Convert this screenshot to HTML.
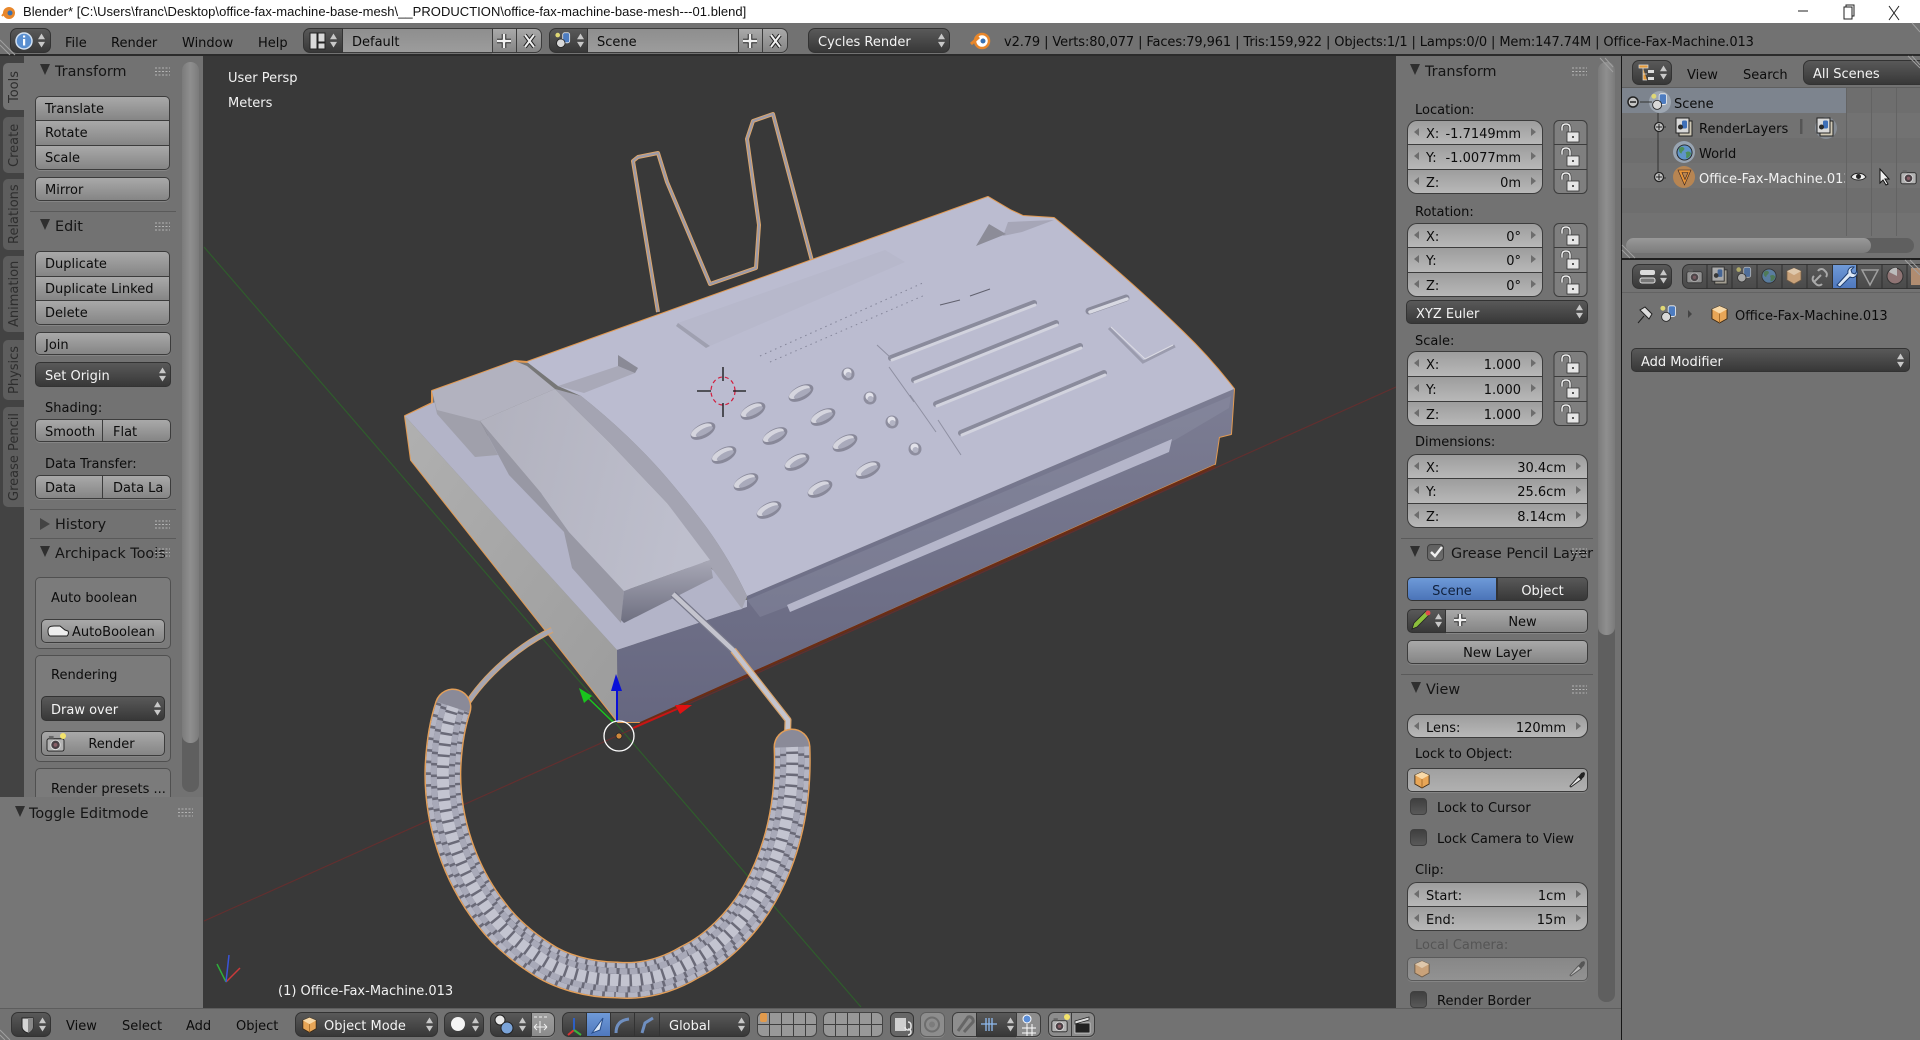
<!DOCTYPE html>
<html><head><meta charset="utf-8"><title>Blender</title>
<style>
html,body{margin:0;padding:0;background:#727272;}
#r{position:relative;width:1920px;height:1040px;overflow:hidden;background:#727272;font:13px/16px "DejaVu Sans","Liberation Sans",sans-serif;color:#0c0c0c;}
#r div{position:absolute;box-sizing:border-box;white-space:nowrap;}
.t{height:16px;line-height:16px;margin-top:2px}
.h{font-size:14.4px;color:#151515}
.w{color:#f2f2f2}
.g{color:#555}
.b{background:linear-gradient(#a9a9a9,#858585);border:1px solid #3c3c3c;border-radius:5px;line-height:26px;padding-left:9px;box-shadow:0 1px 0 #858585}
.c{text-align:center;padding-left:0}
.d{background:linear-gradient(#595959,#383838);border:1px solid #333;border-radius:5px;line-height:27px;padding-left:9px;color:#f4f4f4}
.f{background:linear-gradient(#8e8e8e,#9c9c9c);border-top:1px solid #3c3c3c;border-bottom:1px solid #3c3c3c}
.n{background:linear-gradient(#9d9d9d,#b8b8b8);border:1px solid #3c3c3c;line-height:27px;padding-left:18px}
.n span{position:absolute;right:21px;top:0}
.n:before{content:"";position:absolute;left:6px;top:7px;border:4px solid transparent;border-left:0;border-right:5px solid #6d6d6d}
.n:after{content:"";position:absolute;right:6px;top:7px;border:4px solid transparent;border-right:0;border-left:5px solid #6d6d6d}
.s{border-radius:10px}
.ft{border-radius:10px 10px 0 0;border-bottom:0}
.fm{border-radius:0;border-bottom:0}
.fb{border-radius:0 0 10px 10px}
.box{border:1px solid #505050;border-radius:5px;background:#7b7b7b}
.div{height:1px;background:#5a5a5a}
.tab{left:3px;width:21px;background:#5d5d5d;border-radius:5px 0 0 5px;color:#2e2e2e}
.tab span{position:absolute;left:1px;top:0;width:21px;height:100%;line-height:21px;text-align:center;writing-mode:vertical-rl;transform:rotate(180deg)}
.ck{background:linear-gradient(#3f3f3f,#595959);border:1px solid #404040;border-radius:4px;width:17px;height:17px}
.row{left:1622px;width:298px;height:25px}
svg{position:absolute;left:0;top:0}
</style></head><body><div id="r">

<!-- title bar -->
<div style="left:0;top:0;width:1920px;height:23px;background:#fff"></div>
<div style="left:23px;top:4px;height:16px;font:13px/16px 'Liberation Sans',sans-serif;color:#111;letter-spacing:.03px">Blender* [C:\Users\franc\Desktop\office-fax-machine-base-mesh\__PRODUCTION\office-fax-machine-base-mesh---01.blend]</div>

<!-- top header -->
<div style="left:0;top:23px;width:1920px;height:33px;background:#727272;border-bottom:2px solid #2b2b2b"></div>
<div class="d" style="left:10px;top:28px;width:41px;height:25px;border-radius:7px"></div>
<div class="t" style="left:65px;top:34px">File</div>
<div class="t" style="left:111px;top:34px">Render</div>
<div class="t" style="left:182px;top:34px">Window</div>
<div class="t" style="left:258px;top:34px">Help</div>
<div class="d" style="left:303px;top:28px;width:40px;height:25px;border-radius:7px 0 0 7px"></div>
<div class="f" style="left:343px;top:28px;width:149px;height:25px"></div>
<div class="t" style="left:352px;top:33px">Default</div>
<div class="b" style="left:492px;top:28px;width:25px;height:25px;border-radius:0"></div>
<div class="b" style="left:517px;top:28px;width:25px;height:25px;border-radius:0 7px 7px 0;border-left:0"></div>
<div class="d" style="left:549px;top:28px;width:39px;height:25px;border-radius:7px 0 0 7px"></div>
<div class="f" style="left:588px;top:28px;width:150px;height:25px"></div>
<div class="t" style="left:597px;top:33px">Scene</div>
<div class="b" style="left:738px;top:28px;width:25px;height:25px;border-radius:0"></div>
<div class="b" style="left:763px;top:28px;width:25px;height:25px;border-radius:0 7px 7px 0;border-left:0"></div>
<div class="d" style="left:808px;top:28px;width:142px;height:25px;border-radius:7px">Cycles Render</div>
<div class="t" style="left:1004px;top:33px;width:760px;letter-spacing:-.11px">v2.79 | Verts:80,077 | Faces:79,961 | Tris:159,922 | Objects:1/1 | Lamps:0/0 | Mem:147.74M | Office-Fax-Machine.013</div>

<!-- left column -->
<div style="left:0;top:56px;width:24px;height:952px;background:#434343"></div>
<div style="left:24px;top:56px;width:179px;height:952px;background:#727272"></div>
<div class="tab" style="top:63px;height:47px;background:#727272"><span>Tools</span></div>
<div class="tab" style="top:117px;height:56px"><span>Create</span></div>
<div class="tab" style="top:179px;height:71px"><span>Relations</span></div>
<div class="tab" style="top:256px;height:76px"><span>Animation</span></div>
<div class="tab" style="top:340px;height:60px"><span>Physics</span></div>
<div class="tab" style="top:407px;height:100px"><span>Grease Pencil</span></div>
<div style="left:182px;top:62px;width:17px;height:730px;background:#5f5f5f;border-radius:8px"></div>
<div style="left:182px;top:62px;width:17px;height:681px;background:linear-gradient(90deg,#7b7b7b,#8f8f8f 50%,#7b7b7b);border-radius:8px"></div>

<div class="t h" style="left:55px;top:62px">Transform</div>
<div class="b" style="left:35px;top:96px;width:135px;height:24px;border-radius:5px 5px 0 0;border-bottom:0">Translate</div>
<div class="b" style="left:35px;top:120px;width:135px;height:25px;border-radius:0;border-bottom:0">Rotate</div>
<div class="b" style="left:35px;top:145px;width:135px;height:25px;border-radius:0 0 5px 5px">Scale</div>
<div class="b" style="left:35px;top:177px;width:135px;height:24px">Mirror</div>
<div class="div" style="left:30px;top:211px;width:146px"></div>
<div class="t h" style="left:55px;top:217px">Edit</div>
<div class="b" style="left:35px;top:251px;width:135px;height:25px;border-radius:5px 5px 0 0;border-bottom:0">Duplicate</div>
<div class="b" style="left:35px;top:276px;width:135px;height:24px;border-radius:0;border-bottom:0">Duplicate Linked</div>
<div class="b" style="left:35px;top:300px;width:135px;height:25px;border-radius:0 0 5px 5px">Delete</div>
<div class="b" style="left:35px;top:332px;width:136px;height:23px">Join</div>
<div class="d" style="left:35px;top:362px;width:136px;height:25px">Set Origin</div>
<div class="t" style="left:45px;top:399px">Shading:</div>
<div class="b" style="left:35px;top:419px;width:68px;height:23px;border-radius:5px 0 0 5px">Smooth</div>
<div class="b" style="left:102px;top:419px;width:69px;height:23px;border-radius:0 5px 5px 0;padding-left:10px">Flat</div>
<div class="t" style="left:45px;top:455px">Data Transfer:</div>
<div class="b" style="left:35px;top:475px;width:68px;height:24px;border-radius:5px 0 0 5px">Data</div>
<div class="b" style="left:102px;top:475px;width:69px;height:24px;border-radius:0 5px 5px 0;padding-left:10px">Data La</div>
<div class="div" style="left:30px;top:509px;width:146px"></div>
<div class="t h" style="left:55px;top:515px">History</div>
<div class="div" style="left:30px;top:538px;width:146px"></div>
<div class="t h" style="left:55px;top:544px;width:113px;overflow:hidden">Archipack Tools</div>
<div class="box" style="left:35px;top:577px;width:136px;height:72px"></div>
<div class="t" style="left:51px;top:589px">Auto boolean</div>
<div class="b" style="left:41px;top:619px;width:124px;height:24px;padding-left:30px">AutoBoolean</div>
<div class="box" style="left:35px;top:655px;width:136px;height:107px"></div>
<div class="t" style="left:51px;top:666px">Rendering</div>
<div class="d" style="left:41px;top:696px;width:124px;height:25px">Draw over</div>
<div class="b c" style="left:41px;top:731px;width:124px;height:25px;padding-left:17px">Render</div>
<div class="box" style="left:35px;top:768px;width:136px;height:40px"></div>
<div class="t" style="left:51px;top:780px">Render presets ...</div>
<div style="left:0;top:797px;width:203px;height:211px;background:#767676"></div>
<div class="t h" style="left:29px;top:804px">Toggle Editmode</div>

<!-- viewport -->
<div style="left:203px;top:56px;width:1193px;height:952px;background:#393939"></div>

<!-- right N panel -->
<div style="left:1396px;top:56px;width:225px;height:952px;background:#727272"></div>
<div style="left:1621px;top:56px;width:1px;height:984px;background:#161616"></div>
<div style="left:1598px;top:62px;width:17px;height:940px;background:#5f5f5f;border-radius:8px"></div>
<div style="left:1598px;top:62px;width:17px;height:573px;background:linear-gradient(90deg,#7b7b7b,#8f8f8f 50%,#7b7b7b);border-radius:8px"></div>
<div class="t h" style="left:1425px;top:62px">Transform</div>
<div class="t" style="left:1415px;top:101px">Location:</div>
<div class="n ft" style="left:1407px;top:120px;width:136px;height:24px">X:<span>-1.7149mm</span></div>
<div class="n fm" style="left:1407px;top:144px;width:136px;height:25px">Y:<span>-1.0077mm</span></div>
<div class="n fb" style="left:1407px;top:169px;width:136px;height:25px">Z:<span>0m</span></div>
<div class="t" style="left:1415px;top:203px">Rotation:</div>
<div class="n ft" style="left:1407px;top:223px;width:136px;height:24px">X:<span>0°</span></div>
<div class="n fm" style="left:1407px;top:247px;width:136px;height:25px">Y:<span>0°</span></div>
<div class="n fb" style="left:1407px;top:272px;width:136px;height:25px">Z:<span>0°</span></div>
<div class="d" style="left:1406px;top:300px;width:182px;height:24px">XYZ Euler</div>
<div class="t" style="left:1415px;top:332px">Scale:</div>
<div class="n ft" style="left:1407px;top:351px;width:136px;height:25px">X:<span>1.000</span></div>
<div class="n fm" style="left:1407px;top:376px;width:136px;height:25px">Y:<span>1.000</span></div>
<div class="n fb" style="left:1407px;top:401px;width:136px;height:25px">Z:<span>1.000</span></div>
<div class="t" style="left:1415px;top:433px">Dimensions:</div>
<div class="n ft" style="left:1407px;top:454px;width:181px;height:24px">X:<span>30.4cm</span></div>
<div class="n fm" style="left:1407px;top:478px;width:181px;height:25px">Y:<span>25.6cm</span></div>
<div class="n fb" style="left:1407px;top:503px;width:181px;height:25px">Z:<span>8.14cm</span></div>
<div class="div" style="left:1401px;top:538px;width:192px"></div>
<div class="ck" style="left:1427px;top:544px;background:linear-gradient(#5f5f5f,#6d6d6d)"></div>
<div class="t h" style="left:1451px;top:544px">Grease Pencil Layer</div>
<div class="d" style="left:1407px;top:577px;width:90px;height:24px;border-radius:5px 0 0 5px;background:linear-gradient(#6e9ad8,#4b74b8);color:#10203c;text-align:center;padding:0">Scene</div>
<div class="d" style="left:1497px;top:577px;width:91px;height:24px;border-radius:0 5px 5px 0;text-align:center;padding:0">Object</div>
<div class="d" style="left:1407px;top:609px;width:39px;height:24px;border-radius:5px 0 0 5px"></div>
<div class="b c" style="left:1446px;top:609px;width:142px;height:24px;border-radius:0 5px 5px 0;border-left:0;padding-left:12px">New</div>
<div class="b c" style="left:1407px;top:640px;width:181px;height:24px">New Layer</div>
<div class="div" style="left:1401px;top:674px;width:192px"></div>
<div class="t h" style="left:1426px;top:680px">View</div>
<div class="n s" style="left:1407px;top:714px;width:181px;height:24px">Lens:<span>120mm</span></div>
<div class="t" style="left:1415px;top:745px">Lock to Object:</div>
<div class="b" style="left:1407px;top:768px;width:181px;height:24px;background:linear-gradient(#a0a0a0,#b0b0b0)"></div>
<div class="ck" style="left:1410px;top:798px"></div>
<div class="t" style="left:1437px;top:799px">Lock to Cursor</div>
<div class="ck" style="left:1410px;top:829px"></div>
<div class="t" style="left:1437px;top:830px">Lock Camera to View</div>
<div class="t" style="left:1415px;top:861px">Clip:</div>
<div class="n ft" style="left:1407px;top:882px;width:181px;height:24px">Start:<span>1cm</span></div>
<div class="n fb" style="left:1407px;top:906px;width:181px;height:25px">End:<span>15m</span></div>
<div class="t g" style="left:1415px;top:936px">Local Camera:</div>
<div class="b" style="left:1407px;top:957px;width:181px;height:24px;background:linear-gradient(#878787,#929292);border-color:#5a5a5a"></div>
<div class="ck" style="left:1410px;top:991px"></div>
<div class="t" style="left:1437px;top:992px">Render Border</div>
<div style="left:1396px;top:1008px;width:225px;height:32px;background:#767676"></div>

<!-- bottom header -->
<div style="left:0;top:1008px;width:1621px;height:32px;background:#727272;border-top:1px solid #5d5d5d"></div>
<div class="d" style="left:11px;top:1012px;width:40px;height:25px;border-radius:7px"></div>
<div class="t" style="left:66px;top:1017px">View</div>
<div class="t" style="left:122px;top:1017px">Select</div>
<div class="t" style="left:186px;top:1017px">Add</div>
<div class="t" style="left:236px;top:1017px">Object</div>
<div class="d" style="left:295px;top:1012px;width:143px;height:25px;border-radius:7px;padding-left:28px">Object Mode</div>
<div class="d" style="left:444px;top:1012px;width:40px;height:25px;border-radius:7px"></div>
<div class="d" style="left:490px;top:1012px;width:42px;height:25px;border-radius:7px 0 0 7px"></div>
<div class="b" style="left:531px;top:1012px;width:24px;height:25px;border-radius:0 7px 7px 0;background:linear-gradient(#9f9f9f,#8b8b8b)"></div>
<div class="d" style="left:562px;top:1012px;width:25px;height:25px;border-radius:7px 0 0 7px"></div>
<div class="d" style="left:586px;top:1012px;width:25px;height:25px;border-radius:0;background:linear-gradient(#6f9ad8,#4f78bd)"></div>
<div class="d" style="left:610px;top:1012px;width:25px;height:25px;border-radius:0"></div>
<div class="d" style="left:634px;top:1012px;width:26px;height:25px;border-radius:0"></div>
<div class="d" style="left:659px;top:1012px;width:91px;height:25px;border-radius:0 7px 7px 0;padding-left:9px">Global</div>
<div style="left:757px;top:1012px;width:60px;height:25px;border:1px solid #444;border-radius:6px;background:repeating-linear-gradient(90deg,transparent 0 11px,#3e3e3e 11px 12px),linear-gradient(180deg,transparent 11px,#3e3e3e 11px,#3e3e3e 12px,transparent 12px),#989898"></div>
<div style="left:823px;top:1012px;width:60px;height:25px;border:1px solid #444;border-radius:6px;background:repeating-linear-gradient(90deg,transparent 0 11px,#3e3e3e 11px 12px),linear-gradient(180deg,transparent 11px,#3e3e3e 11px,#3e3e3e 12px,transparent 12px),#989898"></div>
<div class="d" style="left:890px;top:1012px;width:24px;height:25px;border-radius:6px;background:#666"></div>
<div class="b" style="left:920px;top:1012px;width:25px;height:25px;border-radius:6px;background:#8d8d8d;border-color:#5e5e5e"></div>
<div class="b" style="left:952px;top:1012px;width:25px;height:25px;border-radius:6px 0 0 6px;background:#8d8d8d"></div>
<div class="d" style="left:976px;top:1012px;width:41px;height:25px;border-radius:0"></div>
<div class="b" style="left:1016px;top:1012px;width:25px;height:25px;border-radius:0 6px 6px 0;background:#8d8d8d"></div>
<div class="b" style="left:1048px;top:1012px;width:24px;height:25px;border-radius:6px 0 0 6px;background:#8d8d8d"></div>
<div class="b" style="left:1071px;top:1012px;width:24px;height:25px;border-radius:0 6px 6px 0;background:#8d8d8d"></div>

<!-- outliner -->
<div style="left:1622px;top:56px;width:298px;height:204px;background:#727272"></div>
<div style="left:1622px;top:87px;width:298px;height:1px;background:#5f5f5f"></div>
<div class="row" style="top:88px;background:#6e6e6e"></div>
<div class="row" style="top:113px;background:#727272"></div>
<div class="row" style="top:138px;background:#6e6e6e"></div>
<div class="row" style="top:163px;background:#727272"></div>
<div class="row" style="top:188px;background:#6e6e6e"></div>
<div class="row" style="top:213px;height:25px;background:#727272"></div>
<div class="row" style="top:88px;width:224px;background:#7d848e"></div>
<div style="left:1846px;top:88px;width:1px;height:148px;background:#636363"></div>
<div style="left:1871px;top:88px;width:1px;height:148px;background:#636363"></div>
<div style="left:1896px;top:88px;width:1px;height:148px;background:#636363"></div>
<div class="d" style="left:1632px;top:60px;width:40px;height:25px;border-radius:7px"></div>
<div class="t" style="left:1687px;top:66px">View</div>
<div class="t" style="left:1743px;top:66px">Search</div>
<div class="d" style="left:1803px;top:60px;width:125px;height:25px;border-radius:7px;line-height:28px">All Scenes</div>
<div class="t" style="left:1674px;top:95px">Scene</div>
<div class="t" style="left:1699px;top:120px">RenderLayers</div>
<div class="t" style="left:1699px;top:145px">World</div>
<div class="t w" style="left:1699px;top:170px;width:146px;overflow:hidden">Office-Fax-Machine.013</div>
<div style="left:1626px;top:238px;width:288px;height:15px;background:#5f5f5f;border-radius:8px"></div>
<div style="left:1626px;top:238px;width:245px;height:15px;background:linear-gradient(#999,#7c7c7c);border-radius:8px"></div>
<div style="left:1622px;top:258px;width:298px;height:2px;background:#1f1f1f"></div>

<!-- properties -->
<div style="left:1622px;top:260px;width:298px;height:780px;background:#727272"></div>
<div style="left:1622px;top:292px;width:298px;height:1px;background:#636363"></div>
<div class="d" style="left:1632px;top:264px;width:40px;height:25px;border-radius:7px"></div>
<div class="d" style="left:1682px;top:264px;width:250px;height:25px;border-radius:7px 0 0 7px;background:linear-gradient(#5a5a5a,#4a4a4a)"></div>
<div class="d" style="left:1832px;top:264px;width:25px;height:25px;border-radius:0;background:linear-gradient(#6f9ad8,#4f78bd)"></div>
<div class="t" style="left:1735px;top:307px">Office-Fax-Machine.013</div>
<div class="d" style="left:1631px;top:348px;width:279px;height:24px">Add Modifier</div>

<!-- viewport captions -->
<div class="t w" style="left:228px;top:69px;z-index:3">User Persp</div>
<div class="t w" style="left:228px;top:94px;z-index:3">Meters</div>
<div class="t w" style="left:278px;top:982px;z-index:3">(1) Office-Fax-Machine.013</div>

<!-- drawing overlay -->
<svg width="1920" height="1040" viewBox="0 0 1920 1040" xmlns="http://www.w3.org/2000/svg">
<defs>
<clipPath id="vp"><rect x="203" y="56" width="1193" height="952"/></clipPath>
<linearGradient id="side" x1="0" y1="0" x2="1" y2="1"><stop offset="0" stop-color="#b0b0b0"/><stop offset="1" stop-color="#9c9c9c"/></linearGradient>
<linearGradient id="front" x1="0" y1="0" x2="0" y2="1"><stop offset="0" stop-color="#7c7d93"/><stop offset="1" stop-color="#666780"/></linearGradient>
<linearGradient id="hs" x1="0" y1="0" x2="1" y2="0.2"><stop offset="0" stop-color="#b1b1bd"/><stop offset="1" stop-color="#bebfcd"/></linearGradient>
<linearGradient id="he" x1="0" y1="0" x2="0" y2="1"><stop offset="0" stop-color="#a8a8b6"/><stop offset="1" stop-color="#6e6f80"/></linearGradient>
<path id="cp" d="M792 747C794 800 784 850 760 893C742 925 715 950 690 962C665 977 640 982 617 980C590 980 560 972 540 958C520 945 505 932 492 915C460 875 441 820 443 767C444 745 447 725 453 707"/>
<symbol id="ud" viewBox="0 0 8 16" overflow="visible"><path d="M0 6.500L4 0l4 6.500zM0 9.500L4 16l4-6.500z" fill="#c8c8c8"/></symbol>
<symbol id="tri" viewBox="0 0 10 11"><path d="M0 0h10L5 11z" fill="#2f2f2f"/></symbol>
<symbol id="grip" viewBox="0 0 15 9"><path d="M0 1h15M0 4.500h15M0 8h15" stroke="#b4b4b4" stroke-width="1" stroke-dasharray="2 1.500" fill="none"/></symbol>
<symbol id="lk" viewBox="0 0 20 20"><path d="M2 7.500V4.500c0-2.500 1.500-3.500 4-3.500s4 1 4 3.500V9" fill="none" stroke="#333" stroke-width="2.600"/><path d="M2 7.500V4.500c0-2.500 1.500-3.500 4-3.500s4 1 4 3.500V9" fill="none" stroke="#f4f4f4" stroke-width="1.500"/><rect x="7" y="9" width="12" height="10" fill="#e6e6e6" stroke="#333" stroke-width=".8"/><rect x="12" y="13" width="2" height="2" fill="#555"/></symbol>
<symbol id="key" viewBox="-16 -10 32 20" overflow="visible"><g transform="rotate(-28)"><ellipse rx="13.500" ry="7" fill="#888899"/><ellipse cx="-1" cy="-1.500" rx="11.500" ry="4.700" fill="#d5d5de"/><ellipse cx="1" cy="1" rx="9.500" ry="3" fill="#a9aabb"/></g></symbol>
<symbol id="sk" viewBox="-8 -8 16 16" overflow="visible"><circle r="6.500" fill="#8d8d9e"/><circle cx="-.5" cy="-1.500" r="4" fill="#e2e2ea"/><circle cx=".5" cy="1" r="3" fill="#b3b4c4"/></symbol>
<symbol id="cube" viewBox="0 0 18 20"><path d="M9 1l8 3.500v10L9 19l-8-4.500v-10z" fill="#e8a657" stroke="#3d2a14"/><path d="M9 1l8 3.500L9 9 1 4.500z" fill="#f8d9a8"/><path d="M9 9v10" stroke="#a46a28"/></symbol>
<symbol id="cubeg" viewBox="0 0 18 20"><path d="M9 1l8 3.500v10L9 19l-8-4.500v-10z" fill="#c9a27a" stroke="#6d5a46"/><path d="M9 1l8 3.500L9 9 1 4.500z" fill="#dec7ab"/></symbol>
<symbol id="drop" viewBox="0 0 18 20"><path d="M2 18l-1-1 9-10 3 3z" fill="#e6e6e6" stroke="#222"/><path d="M10 7l3-4 3-1 1 2-1 3-3 3z" fill="#222"/></symbol>
<symbol id="scn" viewBox="0 0 22 22"><circle cx="3.500" cy="4" r="3" fill="#dfd774"/><rect x="10" y="1" width="9" height="13" rx="2.500" fill="#4d7cc0" stroke="#f1f1f1"/><circle cx="7.500" cy="14.500" r="5.500" fill="#d8d8d8" stroke="#222"/></symbol>
<symbol id="rl" viewBox="0 0 18 20"><rect x="4" y="4" width="13" height="15" fill="#cfc8b5" stroke="#222"/><rect x="1" y="1" width="13" height="15" fill="#d8d8d8" stroke="#222"/><rect x="7" y="3.500" width="5" height="8" rx="1.500" fill="#3e6fb8"/><circle cx="5.500" cy="10" r="2.500" fill="#2b2b2b"/></symbol>
<symbol id="globe" viewBox="0 0 18 18"><circle cx="9" cy="9" r="8" fill="#5f94c9" stroke="#222"/><path d="M3 5c3-3 5-2 6 0-1 3-3 2-3 5-2 0-3-2-3-5zM10 9c3-2 5-1 6 1-1 3-3 5-5 5-1-2 1-3-1-6z" fill="#4e8f5a"/></symbol>
<symbol id="cam" viewBox="0 0 20 18"><rect x="1" y="4" width="18" height="13" rx="2" fill="#b3b3b3" stroke="#222"/><rect x="3" y="1" width="5" height="3" fill="#666"/><circle cx="10" cy="10.500" r="5" fill="#4a4045" stroke="#ddd"/><circle cx="10" cy="10.500" r="2" fill="#8a5f67"/></symbol>
</defs>

<!-- viewport -->
<g clip-path="url(#vp)">
<path d="M204 247L861 1007" stroke="#2f5d2c" stroke-width="1.200"/>
<path d="M204 921L1396 387" stroke="#622f2f" stroke-width="1.200"/>

<!-- paper holder wires -->
<path d="M658 312L633 161 638 157 658 153 667 182 710 284 756 268 759 225 747 139 753 121 773 114 812 261" fill="none" stroke="#dba66d" stroke-width="4" stroke-linejoin="round"/>
<path d="M658 312L633 161 638 157 658 153 667 182 710 284 756 268 759 225 747 139 753 121 773 114 812 261" fill="none" stroke="#9a9aab" stroke-width="2" stroke-linejoin="round"/>

<!-- silhouette -->
<path d="M405 416L432 403 432 391 515 361 527 362 988 197 1010 210 1023 216 1054 218Q1130 280 1183 332Q1210 358 1234 389L1231 434 1219 437 1215 464 640 722 618 722 411 460z" fill="#777" stroke="#e29a52" stroke-width="2" stroke-linejoin="round"/>
<path d="M640 723L1215 466" stroke="#6a2d15" stroke-width="2.500"/>
<!-- base side -->
<path d="M405 416L411 460 618 722 617 650z" fill="url(#side)"/>
<!-- base top -->
<path d="M405 416L450 395 640 600 747 600 747 607 617 650z" fill="#b3b4c8"/>
<!-- front -->
<path d="M747 596L1234 389 1231 434 1219 437 1215 464 640 722 618 722 617 650 747 607z" fill="url(#front)"/>
<path d="M747 600L1231 396 1229 408 1175 440 789 606 760 617z" fill="#9597ab" opacity=".3"/>
<path d="M1172 439L1169 452 790 612 787 605z" fill="#b5b6ca"/>
<!-- top surface -->
<path d="M527 362L988 197 1010 210 1023 216 1054 218Q1130 280 1183 332Q1210 358 1234 389L747 596Q730 560 707 528Q690 505 667 478Q650 458 627 436Q605 415 581 396L558 386z" fill="#bbbcd0"/>
<!-- shelf below the handset end -->
<path d="M700 560L747 596 742 609 624 640 610 620z" fill="#b3b4c8"/>
<!-- seam wedge -->
<path d="M555 389L581 396Q605 415 627 436Q650 458 667 478Q690 505 707 528Q730 560 747 596L742 609 710 566 667 503 610 443z" fill="#a4a4b2"/>
<!-- left fin and shade -->
<path d="M558 386L618 366 635 373 584 393z" fill="#a9a9b8"/>
<path d="M618 355L638 368 635 373 618 366z" fill="#8a8a96"/>
<!-- back raised panel -->
<path d="M678 323L885 250 905 262 710 346z" fill="#b7b8cb"/>
<path d="M678 323L710 346 706 348 676 326z" fill="#9fa0b0"/>
<!-- right fin -->
<path d="M1003 236L1008 222 1054 220 1022 232z" fill="#a6a6b7"/>
<path d="M976 246L989 224 1006 234z" fill="#8c8c98"/>
<!-- dashes and dots -->
<path d="M760 356L925 282M770 362L925 295" stroke="#85869a" stroke-width="1" stroke-dasharray="1.500 4"/>
<path d="M940 305L960 300M970 296L990 289" stroke="#60606e" stroke-width="1"/>
<!-- bars -->
<path d="M891 358L1034 303M914 380L1056 323M936 404L1080 346M961 433L1104 373" stroke="#8a8b9c" stroke-width="6" stroke-linecap="round"/>
<path d="M892 360L1035 305M915 382L1057 325M937 406L1081 348M962 435L1105 375" stroke="#d2d3de" stroke-width="3" stroke-linecap="round"/>
<path d="M877 345L891 358M889 367L914 402M910 395L936 432M938 420L961 455" stroke="#8f90a2" stroke-width="1"/>
<path d="M1089 311L1126 298" stroke="#8a8b9c" stroke-width="7" stroke-linecap="round"/>
<path d="M1090 312L1127 299" stroke="#d8d9e2" stroke-width="3.500" stroke-linecap="round"/>
<path d="M1109 328L1143 362 1175 346" fill="none" stroke="#9b9cae" stroke-width="3"/>
<path d="M1111 327L1145 359 1173 345" fill="none" stroke="#dcdce4" stroke-width="1"/>
<!-- keypad -->
<use href="#key" x="687" y="421" width="32" height="20"/><use href="#key" x="737" y="401" width="32" height="20"/><use href="#key" x="785" y="383" width="32" height="20"/>
<use href="#key" x="708" y="445" width="32" height="20"/><use href="#key" x="759" y="426" width="32" height="20"/><use href="#key" x="807" y="407" width="32" height="20"/>
<use href="#key" x="730" y="472" width="32" height="20"/><use href="#key" x="781" y="452" width="32" height="20"/><use href="#key" x="829" y="433" width="32" height="20"/>
<use href="#key" x="753" y="500" width="32" height="20"/><use href="#key" x="804" y="479" width="32" height="20"/><use href="#key" x="852" y="460" width="32" height="20"/>
<use href="#sk" x="840" y="366" width="16" height="16"/><use href="#sk" x="862" y="390" width="16" height="16"/><use href="#sk" x="884" y="414" width="16" height="16"/><use href="#sk" x="907" y="441" width="16" height="16"/>
<!-- handset -->
<path d="M437 414L475 457 498 455 480 421 432 391z" fill="#a0a0ab"/>
<path d="M480 421L509 475 564 532 572 568 621 623 624 591 569 532 541 493z" fill="#9898a4"/>
<path d="M480 421L555 389 610 443 667 503 710 560 624 591 569 532 541 493z" fill="url(#hs)"/>
<path d="M624 591L710 560 713 578 624 623 621 620z" fill="url(#he)"/>
<path d="M432 391L515 361 527 366 555 389 480 421 437 410z" fill="#b2b2bf"/>
<!-- 3D cursor -->
<ellipse cx="723" cy="391" rx="12" ry="14" fill="none" stroke="#d21f3f" stroke-width="1.200" stroke-dasharray="4 3"/>
<path d="M723 367V381M723 403V417M697 391H711M733 391H746" stroke="#111" stroke-width="1.300"/>
<!-- cords -->
<path d="M552 630C520 645 485 675 465 707" fill="none" stroke="#d8a36a" stroke-width="6"/>
<path d="M552 630C520 645 485 675 465 707" fill="none" stroke="#a6a6b2" stroke-width="4"/>
<path d="M733 650L788 720 787 750" fill="none" stroke="#d8a36a" stroke-width="7" stroke-linejoin="round"/>
<path d="M673 594L733 650" fill="none" stroke="#77788a" stroke-width="7"/>
<path d="M673 594L733 650 788 720 787 750" fill="none" stroke="#c4c4ce" stroke-width="4.500" stroke-linejoin="round"/>
<!-- coil -->
<use href="#cp" fill="none" stroke="#e39f59" stroke-width="37" stroke-linecap="round"/>
<use href="#cp" fill="none" stroke="#8a8a98" stroke-width="34" stroke-linecap="round"/>
<use href="#cp" fill="none" stroke="#6a6a78" stroke-width="34"/>
<use href="#cp" fill="none" stroke="#b4b5c3" stroke-width="34" stroke-dasharray="8.500 2.500"/>
<use href="#cp" fill="none" stroke="#6a6a78" stroke-width="24"/>
<use href="#cp" fill="none" stroke="#a8a9b8" stroke-width="24" stroke-dasharray="8.500 2.500" stroke-dashoffset="2"/>
<use href="#cp" fill="none" stroke="#6a6a78" stroke-width="12"/>
<use href="#cp" fill="none" stroke="#c3c4d0" stroke-width="12" stroke-dasharray="8.500 2.500" stroke-dashoffset="4"/>
<!-- gizmo -->
<path d="M617 722V684" stroke="#0a10d8" stroke-width="2"/><path d="M616 674L611 691H622z" fill="#0a10d8"/>
<path d="M613 722L585 695" stroke="#19c61d" stroke-width="1.500"/><path d="M579 688L584 703 592 696z" fill="#19c61d"/>
<path d="M633 728L677 709" stroke="#c81414" stroke-width="2"/><path d="M692 705L675 705 680 714z" fill="#e01212"/>
<circle cx="619" cy="736" r="15" fill="none" stroke="#fff" stroke-width="1.300"/>
<circle cx="619" cy="736" r="3" fill="#d0893b" stroke="#222" stroke-width=".7"/>
<!-- axis widget -->
<path d="M226 982L240 968" stroke="#c93a3a" stroke-width="1.500"/><path d="M226 982L217 964" stroke="#2fae3a" stroke-width="1.500"/><path d="M226 982L229 955" stroke="#3a54d8" stroke-width="1.500"/>
</g>

<!-- title logo + window controls -->
<circle cx="9" cy="13" r="6" fill="#e8872b"/><circle cx="10" cy="13" r="2.500" fill="#3870b0"/><path d="M2 16l5-6" stroke="#e8872b" stroke-width="2"/>
<path d="M1798 11H1808" stroke="#222"/><path d="M1844 7h8v12h-8zM1846 7V5h8v11h-2" fill="#fff" stroke="#222"/><path d="M1889 6l10 14M1899 6l-10 14" stroke="#222"/>

<!-- header icons -->
<circle cx="24" cy="41" r="8" fill="#5a8fd0" stroke="#d4e2f2" stroke-width="1.500"/><rect x="23" y="39" width="2.200" height="6.500" fill="#fff"/><rect x="23" y="35.500" width="2.200" height="2" fill="#fff"/>
<use href="#ud" x="38" y="33" width="7" height="15"/>
<rect x="310" y="33" width="7" height="16" fill="#d8d8d8" stroke="#222"/><rect x="318" y="33" width="7" height="9" fill="#d8d8d8" stroke="#222"/><rect x="318" y="43" width="7" height="6" fill="#d8d8d8" stroke="#222"/>
<use href="#ud" x="330" y="33" width="7" height="15"/>
<path d="M504 34v14M497 41h14" stroke="#222" stroke-width="4.500"/><path d="M504 34v14M497 41h14" stroke="#f0f0f0" stroke-width="2.500"/>
<path d="M525 35l9 12M534 35l-9 12" stroke="#222" stroke-width="4"/><path d="M525 35l9 12M534 35l-9 12" stroke="#f0f0f0" stroke-width="2"/>
<path d="M750 34v14M743 41h14" stroke="#222" stroke-width="4.500"/><path d="M750 34v14M743 41h14" stroke="#f0f0f0" stroke-width="2.500"/>
<path d="M771 35l9 12M780 35l-9 12" stroke="#222" stroke-width="4"/><path d="M771 35l9 12M780 35l-9 12" stroke="#f0f0f0" stroke-width="2"/>
<use href="#scn" x="555" y="31" width="17" height="19"/>
<use href="#ud" x="577" y="33" width="7" height="15"/>
<use href="#ud" x="938" y="33" width="7" height="15"/>
<circle cx="982" cy="41" r="7" fill="#fff" stroke="#e8872b" stroke-width="2.500"/><circle cx="983" cy="41" r="2.500" fill="#3870b0"/><path d="M971 44l8-7" stroke="#e8872b" stroke-width="3"/>

<!-- panel triangles and grips -->
<use href="#tri" x="40" y="64" width="10" height="11"/><use href="#tri" x="40" y="219" width="10" height="11"/><use href="#tri" x="40" y="546" width="10" height="11"/><use href="#tri" x="15" y="806" width="10" height="11"/><use href="#tri" x="1410" y="64" width="10" height="11"/><use href="#tri" x="1410" y="546" width="10" height="11"/><use href="#tri" x="1411" y="682" width="10" height="11"/>
<path d="M40 518v12l10-6z" fill="#444"/>
<use href="#grip" x="155" y="67" width="15" height="9"/><use href="#grip" x="155" y="222" width="15" height="9"/><use href="#grip" x="155" y="520" width="15" height="9"/><use href="#grip" x="155" y="548" width="15" height="9"/><use href="#grip" x="178" y="808" width="15" height="9"/><use href="#grip" x="1572" y="67" width="15" height="9"/><use href="#grip" x="1572" y="548" width="15" height="9"/><use href="#grip" x="1572" y="685" width="15" height="9"/>

<!-- dropdown arrows -->
<use href="#ud" x="159" y="367" width="7" height="15"/><use href="#ud" x="154" y="701" width="7" height="15"/><use href="#ud" x="1576" y="304" width="7" height="15"/><use href="#ud" x="1897" y="353" width="7" height="15"/>

<!-- left panel icons -->
<path transform="translate(0,10)" d="M48 621c0-4 2-5 6-5h6l5 4 3 1c1 2 0 4-1 5H50c-1 0-2-2-2-5z" fill="#eee" stroke="#222"/>
<use href="#cam" x="46" y="735" width="19" height="17"/><circle cx="63" cy="736" r="3" fill="#f3e36b"/>

<!-- lock column -->
<g fill="#7f7f7f" stroke="#3c3c3c"><rect x="1554" y="120.500" width="33" height="73" rx="5"/><rect x="1554" y="223.500" width="33" height="73" rx="5"/><rect x="1554" y="351.500" width="33" height="74" rx="5"/></g>
<path d="M1554 144.500h33M1554 169.500h33M1554 247.500h33M1554 272.500h33M1554 376.500h33M1554 401.500h33" stroke="#3c3c3c"/>
<use href="#lk" x="1560" y="123" width="20" height="20"/><use href="#lk" x="1560" y="147" width="20" height="20"/><use href="#lk" x="1560" y="172" width="20" height="20"/>
<use href="#lk" x="1560" y="226" width="20" height="20"/><use href="#lk" x="1560" y="250" width="20" height="20"/><use href="#lk" x="1560" y="275" width="20" height="20"/>
<use href="#lk" x="1560" y="354" width="20" height="20"/><use href="#lk" x="1560" y="379" width="20" height="20"/><use href="#lk" x="1560" y="404" width="20" height="20"/>

<!-- right panel icons -->
<path d="M1431 552l4 4 7-9" fill="none" stroke="#f0f0f0" stroke-width="2.500"/>
<path d="M1412 629l2-6 12-12 3 4-12 12z" fill="#8cbf3c" stroke="#222" stroke-width=".8"/><circle cx="1428" cy="613" r="2.500" fill="#e04c4c"/>
<use href="#ud" x="1435" y="613" width="7" height="15"/>
<path d="M1460 614v12M1454 620h12" stroke="#222" stroke-width="4.500"/><path d="M1460 614v12M1454 620h12" stroke="#f0f0f0" stroke-width="2.500"/>
<use href="#cube" x="1414" y="771" width="16" height="18"/>
<use href="#drop" x="1569" y="770" width="17" height="19"/>
<use href="#cubeg" x="1414" y="960" width="16" height="18"/>
<g opacity=".5"><use href="#drop" x="1569" y="959" width="17" height="19"/></g>

<!-- outliner icons -->
<path d="M1639 65h9v3h-9zM1643 68v12h4M1643 74h4" fill="#e29a3c" stroke="#ddd" stroke-width=".7"/><rect x="1648" y="70" width="6" height="3" fill="#ddd"/><rect x="1648" y="77" width="6" height="3" fill="#ddd"/>
<use href="#ud" x="1660" y="65" width="7" height="15"/>
<circle cx="1660" cy="102" r="11" fill="#9ea7b2"/>
<use href="#scn" x="1651" y="92" width="18" height="20"/>
<path d="M1658 113V175M1658 127h8M1658 178h8M1640 102h12" stroke="#333"/>
<circle cx="1633" cy="102" r="5" fill="#c4c4c4" stroke="#222" stroke-width="1.500"/><path d="M1630 102h6" stroke="#222" stroke-width="1.500"/>
<circle cx="1659" cy="127" r="4.500" fill="#c4c4c4" stroke="#222" stroke-width="1.300"/><path d="M1656 127h6M1659 124v6" stroke="#222"/>
<circle cx="1659" cy="177" r="4.500" fill="#c4c4c4" stroke="#222" stroke-width="1.300"/><path d="M1656 177h6M1659 174v6" stroke="#222"/>
<use href="#rl" x="1675" y="117" width="18" height="20"/>
<rect x="1800" y="119" width="2.500" height="15" fill="#555"/>
<circle cx="1826" cy="128" r="11" fill="#868c94"/><use href="#rl" x="1816" y="117" width="18" height="20"/>
<circle cx="1684" cy="152" r="11" fill="#98a4b2"/><use href="#globe" x="1676" y="144" width="17" height="17"/>
<circle cx="1684" cy="177" r="11" fill="#b78552"/><path d="M1678 170h13l-6.500 15zM1682 172.500h6l-3 7z" fill="#e89538" fill-rule="evenodd" stroke="#322" stroke-width=".6"/>
<path d="M1851 177c3-5 12-5 15 0-3 4-12 4-15 0z" fill="#eee" stroke="#222"/><circle cx="1858.500" cy="176.500" r="2.500" fill="#222"/>
<path d="M1880 169v14l3-3 3 5 2-1-3-5h4z" fill="#f0f0f0" stroke="#111"/>
<use href="#cam" x="1900" y="169" width="17" height="16"/>

<!-- properties icons -->
<rect x="1640" y="270" width="15" height="5" rx="2" fill="#dcdcdc"/><rect x="1640" y="278" width="15" height="5" rx="2" fill="#777" stroke="#ddd"/>
<use href="#ud" x="1660" y="269" width="7" height="15"/>
<path d="M1707 264v25M1732 264v25M1757 264v25M1782 264v25M1807 264v25M1857 264v25M1882 264v25M1907 264v25" stroke="#2f2f2f"/>
<g opacity=".65"><use href="#cam" x="1686" y="268" width="17" height="16"/><use href="#rl" x="1711" y="266" width="17" height="19"/><use href="#scn" x="1736" y="266" width="17" height="18"/><use href="#globe" x="1761" y="268" width="16" height="16"/></g>
<use href="#cubeg" x="1786" y="267" width="16" height="18"/>
<path d="M1814 282l7-7M1818 271a4 4 0 0 1 6-1l2 2a4 4 0 0 1 0 5M1822 284a4 4 0 0 1-6 0l-2-2a4 4 0 0 1 0-6" fill="none" stroke="#a9a9a9" stroke-width="2"/>
<path d="M1837 285l11-12a5 5 0 0 1 6-6l-3 3 1 3 3 1 2-3a5 5 0 0 1-7 6l-10 10z" fill="#dde8f5" stroke="#1f3e70"/>
<path d="M1862 270h16l-8 15z" fill="none" stroke="#9f9f9f" stroke-width="1.500"/>
<circle cx="1895" cy="276" r="8" fill="#8f7474" stroke="#333"/><path d="M1889 272a7 7 0 0 1 8-4v8z" fill="#bbb"/>
<rect x="1911" y="268" width="9" height="17" fill="#b08c70"/>
<path d="M1638 323l6-7M1640 310l9 9 3-5-7-7z" fill="#dedede" stroke="#222"/>
<use href="#scn" x="1660" y="304" width="18" height="20"/>
<path d="M1688 310v8l4-4z" fill="#444"/>
<use href="#cube" x="1711" y="305" width="17" height="19"/>

<!-- bottom header icons -->
<path d="M22 1018h11v9c0 3-3 5-5.500 6-2.500-1-5.500-3-5.500-6z" fill="#d4d4d4" stroke="#222"/><path d="M28 1018h5v9c0 3-3 5-5 6z" fill="#888"/>
<use href="#ud" x="39" y="1017" width="7" height="15"/>
<use href="#cube" x="302" y="1016" width="15" height="18"/>
<use href="#ud" x="426" y="1017" width="7" height="15"/>
<circle cx="458" cy="1024" r="7" fill="#f4f4f4"/>
<use href="#ud" x="472" y="1017" width="7" height="15"/>
<circle cx="500" cy="1020" r="5" fill="#e8e8e8" stroke="#222"/><circle cx="507" cy="1028" r="6" fill="#7aa3d8" stroke="#222"/>
<use href="#ud" x="519" y="1017" width="7" height="15"/>
<path d="M534 1017h3M539 1017h3M544 1017h3M540 1021v12M534 1027l3-3M534 1027l3 3M547 1027l-3-3M547 1027l-3 3M534 1027h13" stroke="#eee" fill="none"/>
<path d="M574 1030l-6 5" stroke="#d33" stroke-width="2"/><path d="M574 1030v-12" stroke="#2e5fc4" stroke-width="2"/><path d="M574 1030l7 5" stroke="#3cb33c" stroke-width="2"/>
<path d="M592 1033l11-15-3 12z" fill="#dbe7f7" stroke="#294e8a"/>
<path d="M616 1033c0-8 4-13 13-14" fill="none" stroke="#6f8fc0" stroke-width="3"/>
<path d="M642 1033l3-10 8-5" fill="none" stroke="#6f8fc0" stroke-width="3"/>
<use href="#ud" x="738" y="1017" width="7" height="15"/>
<rect x="760" y="1013" width="7" height="9" rx="2" fill="#e19a4c"/>
<rect x="895" y="1018" width="11" height="13" fill="#cfcfcf"/><path d="M908 1022a3 3 0 0 1 3 3v2a3 3 0 0 1-6 0M908 1029a3 3 0 0 1 0 6" fill="none" stroke="#e8e8e8" stroke-width="1.500"/>
<circle cx="932" cy="1024.500" r="7" fill="none" stroke="#6e6e6e" stroke-width="2"/><circle cx="932" cy="1024.500" r="3" fill="#7c7c7c"/>
<path d="M958 1031l10-14a4 4 0 0 1 5 5l-9 10" fill="none" stroke="#666" stroke-width="3"/>
<path d="M981 1024h16M986 1018v13M989 1018v13M992 1018v13" stroke="#8fbbf0" stroke-width="1.300"/>
<use href="#ud" x="1007" y="1017" width="7" height="15"/>
<circle cx="1027" cy="1019" r="4" fill="#5b8ed8" stroke="#fff"/><path d="M1022 1028h14M1022 1033h14M1027 1024v12M1032 1024v12" stroke="#fff"/>
<use href="#cam" x="1051" y="1017" width="17" height="16"/><circle cx="1067" cy="1017" r="3" fill="#f3e36b"/>
<rect x="1075" y="1023" width="15" height="10" fill="#222" stroke="#ddd" stroke-width=".7"/><path d="M1075 1021l14-4v3l-14 4z" fill="#ddd" stroke="#222" stroke-width=".7"/>

<!-- corner hatching -->
<path d="M1600 58l13 14M1605 58l8 9M1912 23l8 9M1908 56l12 12M1912 56l8 9M1622 245l13 13M1622 250l8 8M1905 260l15 15M1910 260l10 10M0 1035l5 5M0 1030l10 10M0 45l10 10M0 40l15 15" stroke="#a0a0a0" stroke-width="1"/>
</svg>
</div></body></html>
